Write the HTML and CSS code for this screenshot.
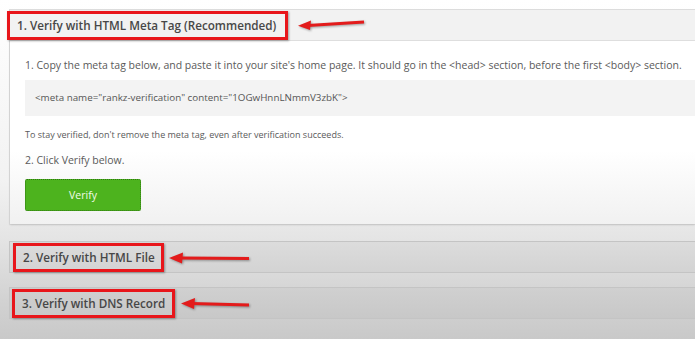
FILE: index.html
```
<!DOCTYPE html>
<html>
<head>
    <title>Verify your site</title>
    <meta name="viewport" content="width=device-width, initial-scale=1">
    <link rel="stylesheet" href="styles.css">
</head>
<body>
    <div class="page">
        <div class="panel open">
            <div class="panel-head">
                <span class="mark m1">1. Verify with HTML Meta Tag (Recommended)</span>
                <svg class="arrow a1" width="70" height="14" viewBox="0 0 70 14">
                    <path d="M10 8.5 L66 5" stroke="#e31b1b" stroke-width="3" fill="none"/>
                    <path d="M0 8.8 L13 3.5 L12 13 Z" fill="#e31b1b"/>
                </svg>
            </div>
            <div class="panel-body">
                <p class="step">1. Copy the meta tag below, and paste it into your site's home page. It should go in the &lt;head&gt; section, before the first &lt;body&gt; section.</p>
                <div class="code">&lt;meta name="rankz-verification" content="1OGwHnnLNmmV3zbK"&gt;</div>
                <p class="note">To stay verified, don't remove the meta tag, even after verification succeeds.</p>
                <p class="step">2. Click Verify below.</p>
                <button class="verify">Verify</button>
            </div>
        </div>

        <div class="panel closed p2">
            <div class="panel-head">
                <span class="mark m2">2. Verify with HTML File</span>
                <svg class="arrow a2" width="82" height="14" viewBox="0 0 82 14">
                    <path d="M10 7 L80 7.5" stroke="#e31b1b" stroke-width="3" fill="none"/>
                    <path d="M0 7 L14 1.5 L13 12.5 Z" fill="#e31b1b"/>
                </svg>
            </div>
        </div>

        <div class="panel closed p3">
            <div class="panel-head">
                <span class="mark m3">3. Verify with DNS Record</span>
                <svg class="arrow a3" width="70" height="14" viewBox="0 0 70 14">
                    <path d="M10 6.5 L68 8" stroke="#e31b1b" stroke-width="3" fill="none"/>
                    <path d="M0 6.5 L14 1 L13 12 Z" fill="#e31b1b"/>
                </svg>
            </div>
        </div>
    </div>
</body>
</html>
```

FILE: styles.css
```
body {
    margin: 0;
    height: 339px;
    overflow: hidden;
    font-family: "Open Sans", Arial, sans-serif;
    background: linear-gradient(#ffffff 0px, #f2f2f2 180px, #e4e4e4 240px, #d2d2d2 300px, #c9c9c9 339px);
}

.page {
    padding: 9px 0 0 9px;
}

.panel {
    border: 1px solid #dcdcdc;
    border-right: none;
}

.panel-head {
    display: flex;
    align-items: center;
    height: 30px;
    white-space: nowrap;
}

.open .panel-head {
    background: #f2f2f2;
    border-bottom: 1px solid #e0e0e0;
}

.mark {
    display: inline-block;
    border: 3px solid #e8161b;
    padding: 0 9px 0 7px;
    font-size: 11.7px;
    font-weight: 600;
    color: #474747;
    line-height: 23px;
    box-shadow: 1px 1px 2px rgba(0, 0, 0, 0.35);
}

.m1 {
    margin-left: -3px;
    margin-top: 1px;
}

.m2 {
    margin-left: 3px;
    padding-right: 6px;
}

.m3 {
    margin-left: 2px;
    padding-right: 7px;
}

.arrow {
    filter: drop-shadow(1px 1px 1px rgba(0, 0, 0, 0.35));
}

.a1 {
    margin-left: 10px;
    margin-top: -2px;
}

.a2 {
    margin-left: 5px;
    margin-top: 2px;
}

.a3 {
    margin-left: 6px;
    margin-top: 1px;
}

.panel-body {
    background: linear-gradient(#ffffff 60%, #f1f1f1);
    padding: 16px 0 13px 15px;
    box-shadow: 0 1px 2px rgba(0, 0, 0, 0.12);
    color: #5a5a5a;
}

.panel-body p {
    margin: 0;
    white-space: nowrap;
}

.step {
    font-size: 10.5px;
    line-height: 16px;
}

.code {
    margin-top: 7px;
    height: 36px;
    line-height: 36px;
    background: #f3f3f3;
    padding-left: 10px;
    font-size: 9.8px;
    color: #555;
}

.note {
    margin-top: 12px !important;
    font-size: 9px;
    line-height: 14px;
}

.note + .step {
    margin-top: 10px;
}

.verify {
    display: block;
    margin-top: 11px;
    width: 116px;
    height: 32px;
    background: #4db31e;
    border: 1px dotted #2f7a10;
    border-radius: 2px;
    color: #f2fbe9;
    font-family: "Open Sans", Arial, sans-serif;
    font-size: 10.5px;
}

.closed {
    border-color: #c4c4c4;
}

.p2 {
    margin-top: 16px;
}

.p2 .panel-head {
    background: linear-gradient(#dcdcdc, #d3d3d3);
}

.p3 {
    margin-top: 14px;
}

.p3 .panel-head {
    background: linear-gradient(#d0d0d0, #c8c8c8);
}
```
